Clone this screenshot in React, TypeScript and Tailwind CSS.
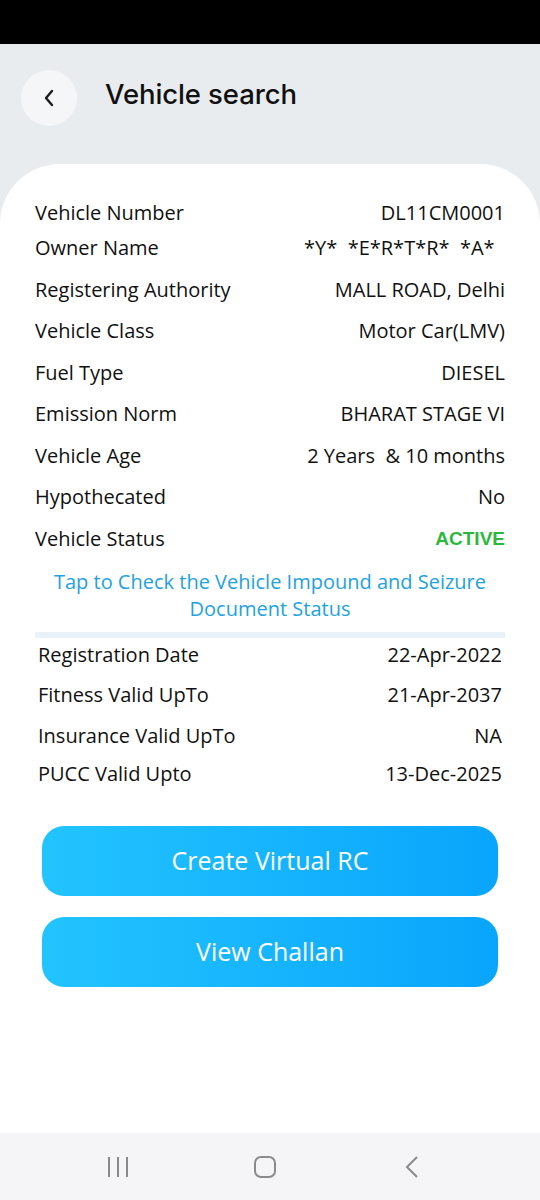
import React from "react";

const rows1: [string, string][] = [
  ["Vehicle Number", "DL11CM0001"],
  ["Owner Name", "*Y*  *E*R*T*R*  *A*  "],
  ["Registering Authority", "MALL ROAD, Delhi"],
  ["Vehicle Class", "Motor Car(LMV)"],
  ["Fuel Type", "DIESEL"],
  ["Emission Norm", "BHARAT STAGE VI"],
  ["Vehicle Age", "2 Years  & 10 months"],
  ["Hypothecated", "No"],
];

const rows2: [string, string][] = [
  ["Registration Date", "22-Apr-2022"],
  ["Fitness Valid UpTo", "21-Apr-2037"],
  ["Insurance Valid UpTo", "NA"],
  ["PUCC Valid Upto", "13-Dec-2025"],
];

export default function App() {
  return (
    <div
      className="w-[540px] h-[1200px] flex flex-col bg-[#e9ecef] overflow-hidden"
      style={{ fontFamily: '"Open Sans", "Noto Sans", sans-serif' }}
    >
      <div className="h-[44px] bg-black shrink-0" />
      <div className="h-[120px] shrink-0 flex items-start pt-[26px] pl-[21px]">
        <div className="w-[56px] h-[56px] rounded-full bg-[#f5f6f8] flex items-center justify-center">
          <svg width="14" height="20" viewBox="0 0 14 20" fill="none">
            <path d="M10 3 L4 10 L10 17" stroke="#1c1c1c" strokeWidth="2.4" strokeLinecap="round" strokeLinejoin="round" />
          </svg>
        </div>
        <div
          className="ml-[28px] h-[50px] flex items-center text-[27.5px] font-medium text-[#111] tracking-[-0.1px]"
          style={{ fontFamily: 'Inter, "Noto Sans", sans-serif' }}
        >
          Vehicle search
        </div>
      </div>
      <div className="flex-1 bg-white rounded-t-[60px] px-[35px] pt-[36px] flex flex-col">
        <div className="flex flex-col text-[20px] text-[#111] leading-[26px]">
          {rows1.map(([k, v], i) => (
            <div key={k} className={`flex justify-between whitespace-pre ${i === 0 ? "" : i === 1 ? "mt-[9px]" : "mt-[15.5px]"}`}>
              <span>{k}</span>
              <span>{v}</span>
            </div>
          ))}
          <div className="flex justify-between mt-[15.5px]">
            <span>Vehicle Status</span>
            <span
              className="font-bold text-[#2db83d] text-[19px]"
              style={{ fontFamily: '"Liberation Sans", Arial, sans-serif' }}
            >
              ACTIVE
            </span>
          </div>
        </div>
        <div className="mt-[16px] text-center text-[20px] leading-[27px] text-[#1ea2e2]">
          Tap to Check the Vehicle Impound and Seizure
          <br />
          Document Status
        </div>
        <div className="mt-[10px] h-[6px] bg-[#eaf2f9]" />
        <div className="flex flex-col text-[20px] text-[#111] leading-[26px] px-[3px] mt-[4px]">
          {rows2.map(([k, v], i) => (
            <div key={k} className={`flex justify-between ${i === 0 ? "" : i === 3 ? "mt-[12px]" : "mt-[14.5px]"}`}>
              <span>{k}</span>
              <span>{v}</span>
            </div>
          ))}
        </div>
        <div className="mt-[39px] px-[7px] flex flex-col gap-[21px]">
          <button className="h-[70px] rounded-[22px] bg-gradient-to-r from-[#22c4fe] to-[#09a5fc] text-white text-[25px] flex items-center justify-center">
            Create Virtual RC
          </button>
          <button className="h-[70px] rounded-[22px] bg-gradient-to-r from-[#22c4fe] to-[#09a5fc] text-white text-[25px] flex items-center justify-center">
            View Challan
          </button>
        </div>
      </div>
      <div className="h-[67px] shrink-0 bg-[#f5f5f7] flex items-center pl-[107px]">
        <svg width="22" height="22" viewBox="0 0 22 22">
          <path d="M2 1 V21 M11 1 V21 M20 1 V21" stroke="#8a8a8a" strokeWidth="2" />
        </svg>
        <svg width="22" height="22" viewBox="0 0 22 22" className="ml-[125px]">
          <rect x="1" y="1" width="20" height="20" rx="6" fill="none" stroke="#8a8a8a" strokeWidth="2" />
        </svg>
        <svg width="14" height="24" viewBox="0 0 14 24" className="ml-[129px]">
          <path d="M12 2 L2 12 L12 22" fill="none" stroke="#8a8a8a" strokeWidth="2" />
        </svg>
      </div>
    </div>
  );
}
